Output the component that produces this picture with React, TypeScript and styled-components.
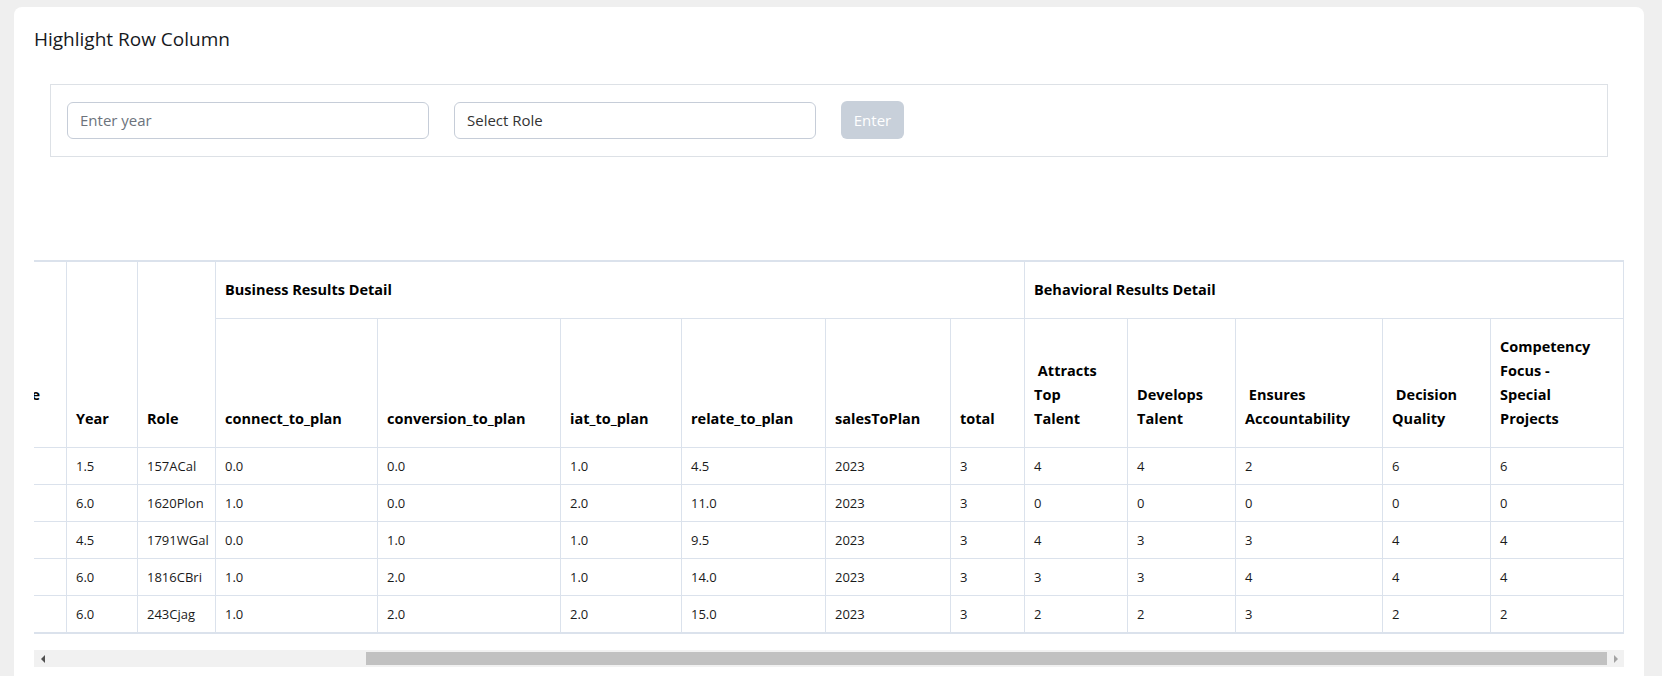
import { useLayoutEffect, useRef, useState } from "react";
import styled, { createGlobalStyle } from "styled-components";

const GlobalStyle = createGlobalStyle`
  body {
    margin: 0;
    background-color: #efefef;
    font-family: "Open Sans", "Noto Sans", sans-serif;
    color: #212529;
  }
`;

const Page = styled.div`
  padding: 7px 18px 0 14px;
`;

const Card = styled.section`
  background-color: #fff;
  border-radius: 8px 8px 0 0;
  padding: 19px 20px 20px;
  min-height: 700px;
`;

const Title = styled.h2`
  margin: 0 0 32px;
  font-size: 19px;
  font-weight: 500;
  line-height: 26px;
  color: #16191d;
`;

const FilterPanel = styled.div`
  margin: 0 16px;
  border: 1px solid #dde1e6;
  padding: 16px 16px 17px;
  display: flex;
  align-items: center;
  gap: 25px;
`;

const Field = styled.input`
  box-sizing: border-box;
  width: 362px;
  height: 37px;
  border: 1px solid #c6cdd8;
  border-radius: 6px;
  padding: 0 12px;
  font-family: inherit;
  font-size: 15px;
  color: #333;
  outline: none;

  &::placeholder {
    color: #6c737c;
  }
`;

const EnterButton = styled.button`
  width: 63px;
  height: 38px;
  border: none;
  border-radius: 6px;
  background-color: #c8d0da;
  color: #fff;
  font-family: inherit;
  font-size: 15px;
  cursor: default;
`;

const TableArea = styled.div`
  margin-top: 103px;
`;

const Scroller = styled.div`
  overflow-x: auto;
  scrollbar-width: none;

  &::-webkit-scrollbar {
    display: none;
  }
`;

const Table = styled.table<{ $width: number }>`
  width: ${({ $width }) => $width}px;
  border-collapse: collapse;
  table-layout: fixed;
  border-top: 2px solid #dbe2ec;
  border-bottom: 2px solid #dbe2ec;
`;

const Th = styled.th`
  border: 1px solid #dbe2ec;
  padding: 16px 9px;
  text-align: left;
  vertical-align: bottom;
  font-size: 14.5px;
  font-weight: 700;
  line-height: 24px;
  color: #000;
  white-space: nowrap;
  overflow: hidden;
`;

const Td = styled.td`
  border: 1px solid #dbe2ec;
  padding: 8px 9px;
  font-size: 13px;
  line-height: 20px;
  color: #1a1a1a;
  white-space: nowrap;
  overflow: hidden;
`;

const ScrollBar = styled.div`
  margin-top: 16px;
  height: 17px;
  display: flex;
  background-color: #f1f1f1;
`;

const Arrow = styled.div<{ $dir: "left" | "right"; $disabled?: boolean }>`
  width: 17px;
  display: flex;
  align-items: center;
  justify-content: center;

  &::before {
    content: "";
    border-top: 4px solid transparent;
    border-bottom: 4px solid transparent;
    ${({ $dir, $disabled }) =>
      $dir === "left"
        ? `border-right: 4px solid ${$disabled ? "#a3a3a3" : "#505050"};`
        : `border-left: 4px solid ${$disabled ? "#a3a3a3" : "#505050"};`}
  }
`;

const Track = styled.div`
  flex: 1;
  display: flex;
  align-items: center;
`;

const Thumb = styled.div`
  height: 13px;
  background-color: #c1c1c1;
`;

type Column = { key: string; label: string[]; width: number };

const fixedCols: Column[] = [
  { key: "id", label: ["Employee ID"], width: 116 },
  { key: "name", label: ["Employee Name"], width: 190 },
  { key: "perf", label: ["Performance", "Score"], width: 130 },
  { key: "year", label: ["Year"], width: 71 },
  { key: "role", label: ["Role"], width: 78 },
];

const businessCols: Column[] = [
  { key: "connect", label: ["connect_to_plan"], width: 162 },
  { key: "conversion", label: ["conversion_to_plan"], width: 183 },
  { key: "iat", label: ["iat_to_plan"], width: 121 },
  { key: "relate", label: ["relate_to_plan"], width: 144 },
  { key: "sales", label: ["salesToPlan"], width: 125 },
  { key: "total", label: ["total"], width: 74 },
];

const behaviorCols: Column[] = [
  { key: "attracts", label: ["\u00a0Attracts", "Top", "Talent"], width: 103 },
  { key: "develops", label: ["Develops", "Talent"], width: 108 },
  { key: "ensures", label: ["\u00a0Ensures", "Accountability"], width: 147 },
  { key: "decision", label: ["\u00a0Decision", "Quality"], width: 108 },
  {
    key: "competency",
    label: ["Competency", "Focus -", "Special", "Projects"],
    width: 133,
  },
];

const rows: string[][] = [
  ["E1042", "Alan Carter", "3.8", "1.5", "157ACal", "0.0", "0.0", "1.0", "4.5", "2023", "3", "4", "4", "2", "6", "6"],
  ["E1187", "Paula Long", "2.9", "6.0", "1620Plon", "1.0", "0.0", "2.0", "11.0", "2023", "3", "0", "0", "0", "0", "0"],
  ["E1203", "Wendy Gale", "3.4", "4.5", "1791WGal", "0.0", "1.0", "1.0", "9.5", "2023", "3", "4", "3", "3", "4", "4"],
  ["E1261", "Chris Brinkley", "4.1", "6.0", "1816CBri", "1.0", "2.0", "1.0", "14.0", "2023", "3", "3", "3", "4", "4", "4"],
  ["E1319", "Carl Jagger", "3.6", "6.0", "243Cjag", "1.0", "2.0", "2.0", "15.0", "2023", "3", "2", "2", "3", "2", "2"],
];

const allCols = [...fixedCols, ...businessCols, ...behaviorCols];
const tableWidth = allCols.reduce((sum, c) => sum + c.width, 0);

function HeaderLabel({ lines }: { lines: string[] }) {
  return (
    <>
      {lines.map((line, i) => (
        <span key={i}>
          {i > 0 && <br />}
          {line}
        </span>
      ))}
    </>
  );
}

function App() {
  const scrollRef = useRef<HTMLDivElement>(null);
  const trackRef = useRef<HTMLDivElement>(null);
  const [thumb, setThumb] = useState({ left: 0, width: 0 });

  useLayoutEffect(() => {
    const el = scrollRef.current;
    const track = trackRef.current;
    if (!el || !track) return;
    el.scrollLeft = el.scrollWidth - el.clientWidth;
    const len = track.clientWidth;
    setThumb({
      left: (len * el.scrollLeft) / el.scrollWidth,
      width: (len * el.clientWidth) / el.scrollWidth,
    });
  }, []);

  return (
    <>
      <GlobalStyle />
      <Page>
        <Card>
          <Title>Highlight Row Column</Title>
          <FilterPanel>
            <Field placeholder="Enter year" />
            <Field defaultValue="Select Role" readOnly />
            <EnterButton disabled>Enter</EnterButton>
          </FilterPanel>

          <TableArea>
            <Scroller ref={scrollRef}>
              <Table $width={tableWidth}>
                <colgroup>
                  {allCols.map((c) => (
                    <col key={c.key} style={{ width: c.width }} />
                  ))}
                </colgroup>
                <thead>
                  <tr>
                    {fixedCols.map((c) => (
                      <Th key={c.key} rowSpan={2}>
                        <HeaderLabel lines={c.label} />
                      </Th>
                    ))}
                    <Th colSpan={businessCols.length}>Business Results Detail</Th>
                    <Th colSpan={behaviorCols.length}>Behavioral Results Detail</Th>
                  </tr>
                  <tr>
                    {[...businessCols, ...behaviorCols].map((c) => (
                      <Th key={c.key}>
                        <HeaderLabel lines={c.label} />
                      </Th>
                    ))}
                  </tr>
                </thead>
                <tbody>
                  {rows.map((row, r) => (
                    <tr key={r}>
                      {row.map((value, i) => (
                        <Td key={i}>{value}</Td>
                      ))}
                    </tr>
                  ))}
                </tbody>
              </Table>
            </Scroller>
            <ScrollBar>
              <Arrow $dir="left" />
              <Track ref={trackRef}>
                <Thumb style={{ marginLeft: thumb.left, width: thumb.width }} />
              </Track>
              <Arrow $dir="right" $disabled />
            </ScrollBar>
          </TableArea>
        </Card>
      </Page>
    </>
  );
}

export default App;
